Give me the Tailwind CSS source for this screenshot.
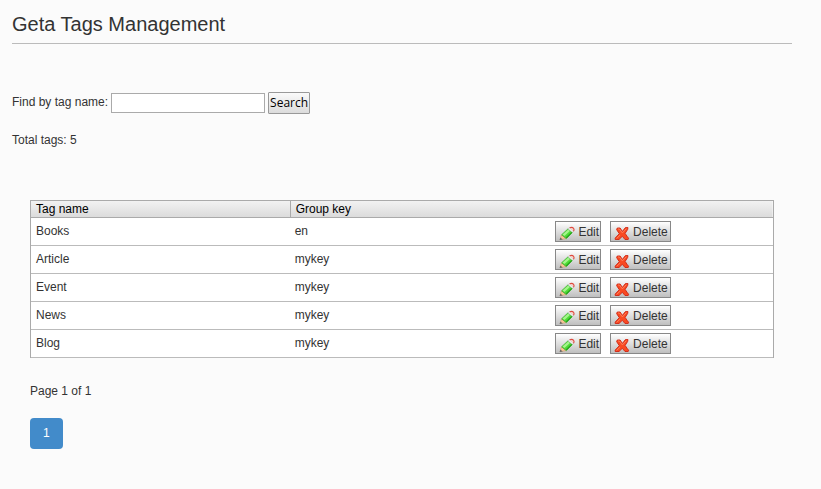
<!DOCTYPE html>
<html lang="en">
<head>
<meta charset="utf-8">
<meta name="viewport" content="width=device-width, initial-scale=1">
<title>Geta Tags Management</title>
<script src="https://cdn.jsdelivr.net/npm/@tailwindcss/browser@4"></script>
</head>
<body class="bg-[#fbfbfb] pt-[11px] pb-10 pl-3 pr-[29px] font-['Liberation_Sans',Arial,sans-serif] text-xs text-[#333]">
<svg class="hidden" aria-hidden="true">
  <symbol id="pencil" viewBox="0 0 16 16">
    <path d="M1.2 13.6 2.4 9 7.2 12.6Z" fill="#f9c898" stroke="#d09a68" stroke-width=".6"/>
    <path d="M.6 14 1.3 11.6 3.8 13.6Z" fill="#666"/>
    <path d="M2.6 8.8 8.8 3 13.4 6.4 7.3 12.6Z" fill="#4fdc36" stroke="#38a829" stroke-width=".7"/>
    <path d="M3.6 8.6 9.2 3.6 10.9 4.9 5.4 10Z" fill="#a5f48c"/>
    <path d="M7.2 12 12.8 6.4" stroke="#26a51b" stroke-width="1.2"/>
    <path d="M9 2.9 10.4 1.7 14.6 5 13.5 6.4Z" fill="#edf1ee" stroke="#9aa69c" stroke-width=".4"/>
    <path d="M10.6 1.8Q13.2 .8 14.4 2.1T14.5 5.2" fill="#fbd5cc" stroke="#dd4b40" stroke-width="1.1"/>
  </symbol>
  <symbol id="cross" viewBox="0 0 16 16">
    <path d="M3.3 2 6.1 2 8.4 5.4 11.4 1.6 14 1.6 13.6 3.6 11.1 7.4 13.4 10.8 14.6 12.2 14.2 13.5 11 13.5 8.3 10.3 5 13.5 1.2 13.5 1.2 12.1 5.3 7.7 2.6 3.6Z" fill="#f94a22" stroke="#cf2412" stroke-width=".9" stroke-linejoin="round"/>
    <path d="M4 3 5.4 3 8.4 6.9 12.4 2.6M2.6 12.4 6 9.2" fill="none" stroke="#ff8460" stroke-width=".9"/>
  </symbol>
</svg>

<header class="border-b border-[#bbb] pb-1.5">
  <h1 class="text-xl leading-[26px]">Geta Tags Management</h1>
</header>

<main>
  <form class="mt-12 flex items-center gap-[3px]">
    <label for="tag" class="pb-0.5">Find by tag name:</label>
    <input id="tag" type="text" class="h-5 w-[154px] border border-[#aaa] bg-white px-1">
    <button type="button" class="h-[22px] rounded-[1px] border border-[#999] bg-linear-to-b from-[#fafafa] to-[#dcdcdc] px-px font-['Open_Sans','Noto_Sans',sans-serif] leading-5 text-black">Search</button>
  </form>
  <p class="mt-[18px] leading-4">Total tags: 5</p>

  <section class="mt-[52px] px-[18px]">
    <table class="w-full table-fixed border-separate border-spacing-0 border-x border-t border-[#aaa] bg-white">
      <thead>
        <tr class="bg-linear-to-b from-[#f2f2f2] to-[#dadada] text-left leading-4 text-black">
          <th scope="col" class="w-[35%] border-r border-b border-[#aaa] px-[5px] font-normal">Tag name</th>
          <th scope="col" class="w-[35%] border-b border-[#aaa] px-[5px] font-normal">Group key</th>
          <td class="border-b border-[#aaa]"></td>
        </tr>
      </thead>
      <tbody id="rows"></tbody>
    </table>
    <p class="mt-[25px] leading-4">Page 1 of 1</p>
    <nav aria-label="Pages" class="mt-[19px] flex">
      <a href="#" class="rounded bg-[#428bca] px-[13px] pt-[7px] pb-2 leading-4 text-white">1</a>
    </nav>
  </section>
</main>

<template id="row">
  <tr>
    <td class="border-b border-[#bbb] px-[5px] pb-px"></td>
    <td class="border-b border-[#bbb] px-1 pb-px"></td>
    <td class="border-b border-[#bbb] px-[5px] py-[3px]">
      <div class="flex gap-[9px]">
        <button type="button" class="flex h-[21px] items-center gap-[3px] border border-[#888] bg-linear-to-b from-white to-[#bfbfbf] pr-px pl-[3px] leading-4"><svg class="mt-1 size-4" aria-hidden="true"><use href="#pencil"/></svg>Edit</button>
        <button type="button" class="flex h-[21px] items-center gap-[3px] border border-[#888] bg-linear-to-b from-white to-[#bfbfbf] pr-0.5 pl-[3px] leading-4"><svg class="mt-1 size-4" aria-hidden="true"><use href="#cross"/></svg>Delete</button>
      </div>
    </td>
  </tr>
</template>
<script>
  const tags = [['Books', 'en'], ['Article', 'mykey'], ['Event', 'mykey'], ['News', 'mykey'], ['Blog', 'mykey']];
  const template = document.getElementById('row');
  for (const [name, group] of tags) {
    const row = template.content.cloneNode(true);
    const cells = row.querySelectorAll('td');
    cells[0].textContent = name;
    cells[1].textContent = group;
    document.getElementById('rows').append(row);
  }
</script>
</body>
</html>
